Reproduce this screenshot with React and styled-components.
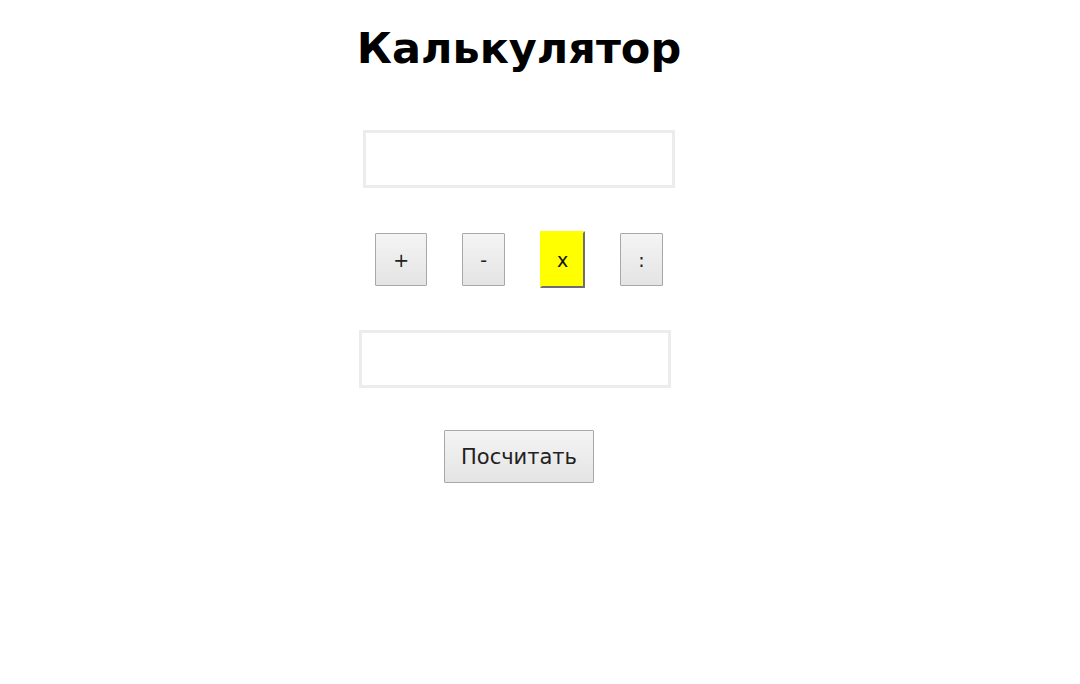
import React, { useState } from 'react';
import styled, { createGlobalStyle } from 'styled-components';

const GlobalStyle = createGlobalStyle`
    html, body {
        margin: 0;
        padding: 0;
        background: #fff;
        font-family: "DejaVu Sans", Verdana, sans-serif;
    }
`;

const Page = styled.div`
    display: flex;
    flex-direction: column;
    align-items: center;
    width: 1038px;
    padding-top: 22px;
`;

const Title = styled.h1`
    margin: 0;
    font-size: 43px;
    font-weight: 700;
    color: #000;
    line-height: 52px;
`;

const Field = styled.input`
    box-sizing: border-box;
    width: 312px;
    height: 58px;
    margin-top: ${p => p.$top}px;
    margin-right: ${p => p.$shift || 0}px;
    border: 3px solid #ececec;
    outline: none;
    font-size: 20px;
    font-family: inherit;
    padding: 0 10px;
`;

const OpRow = styled.div`
    display: flex;
    gap: 35px;
    margin-top: 43px;
    margin-bottom: 42px;
    align-items: center;
`;

const Button = styled.button`
    box-sizing: border-box;
    height: 53px;
    padding: 0 17px;
    font-family: inherit;
    font-size: 19px;
    color: #222;
    border: 1px solid #a8a8a8;
    border-radius: 1px;
    background: linear-gradient(#f4f4f4, #e4e4e4);
    cursor: pointer;

    &.active {
        height: 57px;
        padding: 0 15px;
        background: #ffff00;
        border: 2px solid;
        border-color: #ffff00 #6e6e6e #6e6e6e #ffff00;
        color: #111;
    }
`;

const Submit = styled(Button)`
    margin-top: 42px;
    padding: 0 16px;
    height: 53px;
    font-size: 21px;
`;

function App() {
    const [op, setOp] = useState('x');
    const [a, setA] = useState('');
    const [b, setB] = useState('');

    const ops = ['+', '-', 'x', ':'];

    return (
        <>
            <GlobalStyle />
            <Page>
                <Title>Калькулятор</Title>
                <Field $top={56} value={a} onChange={e => setA(e.target.value)} />
                <OpRow>
                    {ops.map(o => (
                        <Button key={o} className={op === o ? 'active' : ''} onClick={() => setOp(o)}>
                            {o}
                        </Button>
                    ))}
                </OpRow>
                <Field $top={0} $shift={8} value={b} onChange={e => setB(e.target.value)} />
                <Submit>Посчитать</Submit>
            </Page>
        </>
    );
}

export default App;
